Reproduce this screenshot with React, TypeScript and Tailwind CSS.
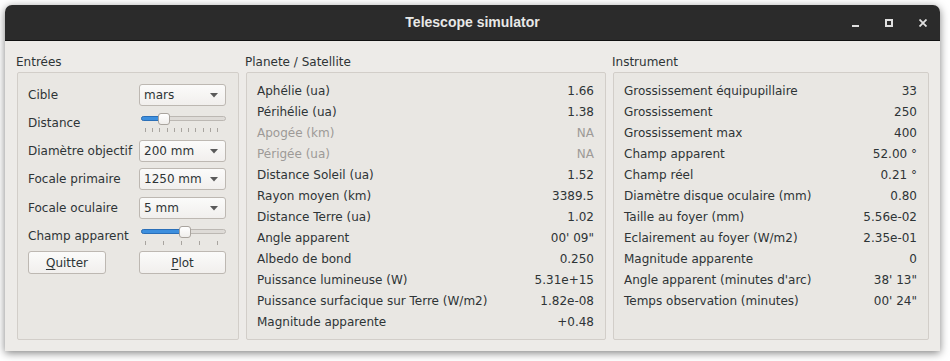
import React from "react";

const FONT = "font-['DejaVu_Sans',sans-serif]";

const PLANET_ROWS: [string, string, boolean?][] = [
  ["Aphélie (ua)", "1.66"],
  ["Périhélie (ua)", "1.38"],
  ["Apogée (km)", "NA", true],
  ["Périgée (ua)", "NA", true],
  ["Distance Soleil (ua)", "1.52"],
  ["Rayon moyen (km)", "3389.5"],
  ["Distance Terre (ua)", "1.02"],
  ["Angle apparent", "00' 09\""],
  ["Albedo de bond", "0.250"],
  ["Puissance lumineuse (W)", "5.31e+15"],
  ["Puissance surfacique sur Terre (W/m2)", "1.82e-08"],
  ["Magnitude apparente", "+0.48"],
];

const INSTRUMENT_ROWS: [string, string][] = [
  ["Grossissement équipupillaire", "33"],
  ["Grossissement", "250"],
  ["Grossissement max", "400"],
  ["Champ apparent", "52.00 °"],
  ["Champ réel", "0.21 °"],
  ["Diamètre disque oculaire (mm)", "0.80"],
  ["Taille au foyer (mm)", "5.56e-02"],
  ["Eclairement au foyer (W/m2)", "2.35e-01"],
  ["Magnitude apparente", "0"],
  ["Angle apparent (minutes d'arc)", "38' 13\""],
  ["Temps observation (minutes)", "00' 24\""],
];

function Combo({ value }: { value: string }) {
  return (
    <div className="flex h-[22px] w-[87px] items-center justify-between rounded-[3px] border border-[#bdb8b2] bg-gradient-to-b from-[#fbfbfa] to-[#f1efed] pl-[4px] pr-[7px]">
      <span>{value}</span>
      <svg width="8" height="5" viewBox="0 0 8 5">
        <path d="M0 0 L8 0 L4 4.5 Z" fill="#5a5a5a" />
      </svg>
    </div>
  );
}

function Slider({ pos, ticks, top }: { pos: number; ticks: number; top: number }) {
  const tickXs = Array.from({ length: ticks }, (_, i) => 6 + (i * 72) / (ticks - 1));
  return (
    <div className="relative h-[22px] w-[87px]">
      <div
        className="absolute left-[2px] right-0 h-[5px] rounded-full border border-[#bcb8b3] bg-[#dedbd7]"
        style={{ top }}
      />
      <div
        className="absolute left-[2px] h-[5px] rounded-l-full border border-[#2a6fb8] bg-[#3d8fde]"
        style={{ top, width: pos - 2 }}
      />
      <div
        className="absolute h-[12px] w-[12px] rounded-[3px] border border-[#a9a49e] bg-gradient-to-b from-white to-[#f0eeec]"
        style={{ top: top - 3, left: pos - 2 }}
      />
      {tickXs.map((x, i) => (
        <div
          key={i}
          className="absolute h-[4px] w-px bg-[#a8a49f]"
          style={{ left: x, top: top + 12 }}
        />
      ))}
    </div>
  );
}

function Group({ title, width, children }: { title: string; width: string; children: React.ReactNode }) {
  return (
    <div className={`flex flex-col ${width}`}>
      <div className="h-[31px] pt-[13px] leading-[16px]">{title}</div>
      <div className="ml-px h-[268px] rounded-[2px] border border-[#d2cec9] bg-[#e9e7e3]">{children}</div>
    </div>
  );
}

function ValueRows({ rows }: { rows: [string, string, boolean?][] }) {
  return (
    <div className="flex flex-col pl-[10px] pr-[11px] pt-[7px]">
      {rows.map(([k, v, dis], i) => (
        <div
          key={i}
          className={`flex h-[21px] items-center justify-between ${dis ? "text-[#9d9a97]" : "text-[#2e3436]"}`}
        >
          <span>{k}</span>
          <span>{v}</span>
        </div>
      ))}
    </div>
  );
}

export default function App() {
  return (
    <div className={`h-[361px] w-[950px] bg-white pl-[5px] pt-[5px] ${FONT} text-[12px] text-[#2e3436]`}>
      <div className="flex h-[346px] w-[935px] flex-col overflow-hidden rounded-t-[7px] bg-[#edebe8] shadow-[0_2px_9px_rgba(0,0,0,0.5)]">
        {/* title bar */}
        <div className="relative flex h-[36px] items-center justify-center border-b border-[#111] bg-[#2b2b2b]">
          <span className="font-['Liberation_Sans',sans-serif] text-[14px] font-bold text-[#e8e8e7]">
            Telescope simulator
          </span>
          <div className="absolute right-[13px] top-[13px] flex items-center gap-[26px]">
            <div className="mt-[7px] h-[2px] w-[7px] bg-[#e0e0e0]" />
            <div className="h-[8px] w-[8px] border-2 border-[#e0e0e0]" />
            <svg width="8" height="8" viewBox="0 0 8 8">
              <path d="M0.5 0.5 L7.5 7.5 M7.5 0.5 L0.5 7.5" stroke="#e0e0e0" strokeWidth="1.8" />
            </svg>
          </div>
        </div>

        {/* body */}
        <div className="flex gap-[6px] px-[11px]">
          <Group title="Entrées" width="w-[223px]">
            <div className="flex flex-col gap-[6px] pl-[10px] pr-[12px] pt-[11px]">
              <div className="flex h-[22px] items-center justify-between">
                <span>Cible</span>
                <Combo value="mars" />
              </div>
              <div className="flex h-[22px] items-center justify-between">
                <span>Distance</span>
                <Slider pos={21} ticks={11} top={4} />
              </div>
              <div className="flex h-[22px] items-center justify-between">
                <span>Diamètre objectif</span>
                <Combo value="200 mm" />
              </div>
              <div className="flex h-[22px] items-center justify-between">
                <span>Focale primaire</span>
                <Combo value="1250 mm" />
              </div>
              <div className="mt-px flex h-[22px] items-center justify-between">
                <span>Focale oculaire</span>
                <Combo value="5 mm" />
              </div>
              <div className="flex h-[22px] items-center justify-between">
                <span>Champ apparent</span>
                <Slider pos={42} ticks={5} top={4} />
              </div>
              <div className="-mt-[2px] flex h-[23px] items-center justify-between">
                <button className="flex h-[23px] w-[78px] items-center justify-center rounded-[3px] border border-[#bdb8b2] bg-gradient-to-b from-[#fbfbfa] to-[#f1efed]">
                  <span className="underline decoration-1 underline-offset-2">Q</span>uitter
                </button>
                <button className="flex h-[23px] w-[87px] items-center justify-center rounded-[3px] border border-[#bdb8b2] bg-gradient-to-b from-[#fbfbfa] to-[#f1efed]">
                  <span className="underline decoration-1 underline-offset-2">P</span>lot
                </button>
              </div>
            </div>
          </Group>
          <Group title="Planete / Satellite" width="w-[361px]">
            <ValueRows rows={PLANET_ROWS} />
          </Group>
          <Group title="Instrument" width="w-[317px]">
            <ValueRows rows={INSTRUMENT_ROWS} />
          </Group>
        </div>
      </div>
    </div>
  );
}
